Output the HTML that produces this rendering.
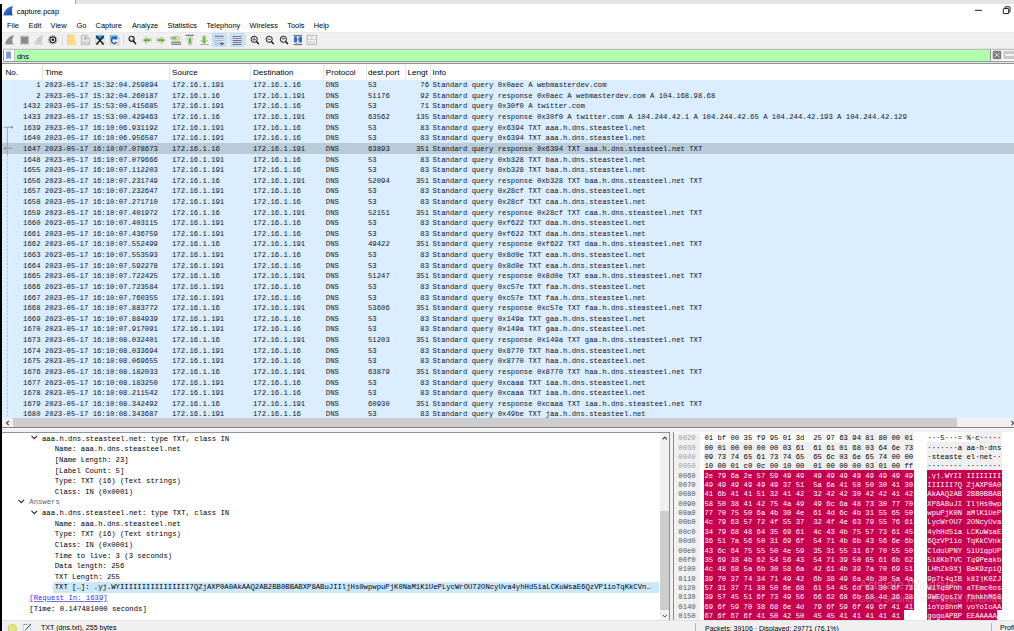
<!DOCTYPE html>
<html><head><meta charset="utf-8"><style>
*{margin:0;padding:0;box-sizing:border-box}
html,body{width:1014px;height:631px;overflow:hidden;background:#fff;position:relative;font-family:"Liberation Sans",sans-serif}
.abs{position:absolute}
.mono{font-family:"Liberation Mono",monospace}
#topstrip{position:absolute;left:75px;top:0;width:939px;height:3.8px;background:#e3e4e6;border-left:1px solid #a4a4a4}
#leftbar{position:absolute;left:0;top:4px;width:2px;height:627px;background:#000}
#title{position:absolute;left:16.8px;top:7.1px;font-size:7.3px;color:#000;line-height:10px}
.menu{position:absolute;top:21.35px;font-size:7.4px;line-height:9px;color:#000}
#toolbar{position:absolute;left:2px;top:32.3px;width:1012px;height:17px;background:#f0f0f0;border-top:1px solid #e9e9e9;border-bottom:1px solid #e4e4e4}
#fgap{position:absolute;left:2px;top:61.8px;width:1012px;height:1.6px;background:#e9e9e9}
#filter{position:absolute;left:3.3px;top:49.3px;width:988px;height:12.5px;background:#afffaf;border:1px solid #8a8a8a;border-top-color:#bdbdbd;border-bottom-color:#86a086;border-radius:1.5px 0 0 1.5px}
#fright{position:absolute;left:991.3px;top:49.3px;width:23px;height:12.5px;background:#fff;border-top:1px solid #bdbdbd;border-bottom:1px solid #9a9a9a}
#fbm{position:absolute;left:0;top:0;width:10.6px;height:10.5px;background:#fff;border-right:1px solid #c4c4c4}
#ftext{position:absolute;left:12.6px;top:1.5px;font-size:7.5px;line-height:9px;color:#000}
#plhead{position:absolute;left:2px;top:63.2px;width:1012px;height:16.5px;background:#fff;border-top:0.9px solid #8c9299}
.hd{position:absolute;top:4.2px;font-size:8.1px;line-height:9px;color:#000}
.hsep{position:absolute;top:0;width:1px;height:16px;background:#e5e5e5}
#plist{position:absolute;left:2px;top:79.7px;width:1012px;height:337.9px;background:#daeeff;overflow:hidden}
.row{position:absolute;left:0;width:1012px;height:10.62px;background:#daeeff;font-family:"Liberation Mono",monospace;font-size:7.267px;line-height:10.62px;color:#12121e;white-space:pre}
.row.sel{background:#b9cbd8}
.c{position:absolute;top:0.5px}
.no{right:973.5px;text-align:right}
.tm{left:42.8px}
.sr{left:170.0px}
.ds{left:251.0px}
.pr{left:323.8px}
.pt{left:366.0px}
.ln{right:585.0px;text-align:right}
.in{left:430.5px}
#hscroll{position:absolute;left:2px;top:417.6px;width:1012px;height:9.8px;background:#f0f0f0}
#hthumb{position:absolute;left:11px;top:0;width:944px;height:9.8px;background:#cdcdcd}
#hsl{position:absolute;left:0;top:0;width:11px;height:10.1px;background:#f0f0f0;font-size:8px;line-height:10px;text-align:center;color:#606060}
#split1{position:absolute;left:2px;top:427.4px;width:1012px;height:1.1px;background:#7a8188}
#split2{position:absolute;left:2px;top:428.5px;width:1012px;height:3.2px;background:#f0f0f0}
#split3{position:absolute;left:2px;top:431.7px;width:668px;height:0.9px;background:#8d949b}
#split4{position:absolute;left:673.4px;top:431.7px;width:341px;height:0.9px;background:#8d949b}
#details{position:absolute;left:2px;top:432.8px;width:658px;height:188px;background:#fff;overflow:hidden}
.tr{position:absolute;font-family:"Liberation Mono",monospace;font-size:7.267px;line-height:10.62px;height:10.62px;color:#000;white-space:pre}
.tr.ans{color:#56606a}
.tr.link{color:#3434e0;text-decoration:underline;text-decoration-color:#7070f0}
.tr.tsel{background:#cce8ff;width:606px;padding-left:1.6px;margin-left:-1.6px;overflow:hidden}
.chev{position:absolute;width:4px;height:4px;border-right:1px solid #333;border-bottom:1px solid #333;transform:rotate(45deg);margin-top:2.6px}
#vscroll{position:absolute;left:660px;top:432.8px;width:9.5px;height:188px;background:#f0f0f0}
#vthumb{position:absolute;left:0;top:78px;width:9.5px;height:99px;background:#cdcdcd}
#hexpane{position:absolute;left:673.4px;top:432.4px;width:341px;height:187.6px;background:#fff;border-left:0.9px solid #858c93;overflow:hidden}
#hsplit{position:absolute;left:668.8px;top:432.4px;width:4.6px;height:187.6px;background:#f0f0f0;border-left:0.9px solid #858c93}
.hoff{position:absolute;left:678.3px;font-family:"Liberation Mono",monospace;font-size:7.267px;line-height:9.36px;color:#a0a0a0;white-space:pre}
.hx{position:absolute;left:704.4px;font-family:"Liberation Mono",monospace;font-size:7.267px;line-height:9.36px;color:#000;white-space:pre}
.as{position:absolute;left:927.3px;font-family:"Liberation Mono",monospace;font-size:7.267px;line-height:9.36px;color:#000;white-space:pre}
.hbg{position:absolute;height:9.36px}
.hbg.g{background:#efefef}
.hoff.dk{color:#4f5860}
.hbg.m{background:#c6004f}
.hx.w,.as.w{color:#fff}
#hoffbg{position:absolute;left:674.4px;top:432.9px;width:25.6px;height:188px;background:#f0f0f0}

.st{position:absolute;font-size:7.1px;line-height:9px;color:#000;white-space:pre}
.wm{position:absolute;color:rgba(205,205,205,0.42);white-space:pre;line-height:1}
#status{position:absolute;left:2px;top:620px;width:1012px;height:11px;background:#f0f0f0;border-top:0.8px solid #e2e2e2}
</style></head><body>
<div id="topstrip"></div>
<div id="leftbar"></div>
<svg class="abs" style="left:0;top:0" width="16" height="18" viewBox="0 0 16 18"><defs><linearGradient id="fg" x1="0" y1="0" x2="1" y2="1"><stop offset="0" stop-color="#4a8ef0"/><stop offset="1" stop-color="#0b3fa8"/></linearGradient></defs><path d="M3.3 15.3 C4.3 10.5 7.5 6.9 13.1 6.1 C11.7 8.6 11.5 12 12.6 15.3 Z" fill="url(#fg)"/><path d="M3.3 15.4 H12.7" stroke="#8aa0c0" stroke-width="0.6"/></svg>
<div id="title">capture.pcap</div>
<svg class="abs" style="left:960px;top:0" width="54" height="20" viewBox="960 0 54 20"><path d="M975 10.3 H981.9" stroke="#000" stroke-width="0.9"/><path d="M1005 8.4 V7.2 Q1005 6.8 1005.4 6.8 H1009.6 Q1010 6.8 1010 7.2 V11.6 Q1010 12 1009.6 12 H1008.7" fill="none" stroke="#000" stroke-width="0.9"/><rect x="1003.3" y="8.6" width="5.4" height="5" rx="0.6" fill="#fff" stroke="#000" stroke-width="0.9"/></svg>
<div class="menu" style="left:7px">File</div>
<div class="menu" style="left:28.5px">Edit</div>
<div class="menu" style="left:50.6px">View</div>
<div class="menu" style="left:76.6px">Go</div>
<div class="menu" style="left:95.6px">Capture</div>
<div class="menu" style="left:131.9px">Analyze</div>
<div class="menu" style="left:167.5px">Statistics</div>
<div class="menu" style="left:206.5px">Telephony</div>
<div class="menu" style="left:249.6px">Wireless</div>
<div class="menu" style="left:287.3px">Tools</div>
<div class="menu" style="left:313.7px">Help</div>
<div id="toolbar"></div><div id="fgap"></div>
<svg class="abs" style="left:0;top:0" width="330" height="50" viewBox="0 0 330 50"><path d="M5 44.5 C6.2 39.275 9.275 35.76 14.5 35 C11.84 37.85 11.84 41.65 13.55 44.5 Z" fill="#8f8f8f"/><path d="M5 44.5 L14.5 44.5" stroke="#c8c8c8" stroke-width="0.8"/><rect x="20.3" y="36" width="8.6" height="8.4" fill="#b4b4b4" stroke="#c8c8c8" stroke-width="0.6"/><rect x="21.3" y="37" width="6.6" height="6.4" fill="#8a8a8a"/><path d="M34.5 44.5 C35.7 39.275 38.775 35.76 44.0 35 C41.34 37.85 41.34 41.65 43.05 44.5 Z" fill="#c8c8c8"/><circle cx="39" cy="41" r="2.3" fill="none" stroke="#f4f4f4" stroke-width="1.1"/><circle cx="39" cy="41" r="2.3" fill="none" stroke="#9a9a9a" stroke-width="0.5"/><circle cx="52.8" cy="39.8" r="4.3" fill="none" stroke="#9c9c9c" stroke-width="1.1" stroke-dasharray="1.2 0.7"/><circle cx="52.8" cy="39.8" r="2.9" fill="#fff" stroke="#1a1a1a" stroke-width="1.1"/><circle cx="52.8" cy="39.8" r="1.25" fill="#000"/><rect x="62.0" y="35" width="0.8" height="10" fill="#d2d2d2"/><rect x="123.1" y="35" width="0.8" height="10" fill="#d2d2d2"/><rect x="226.9" y="35" width="0.8" height="10" fill="#d2d2d2"/><rect x="245.1" y="35" width="0.8" height="10" fill="#d2d2d2"/><path d="M67.3 35 H74.7 V41.3 H76 V45 H67.3 Z" fill="#fadd82"/><path d="M67.3 35.3 H74.7 M67.6 35 V45" stroke="#f0c850" stroke-width="0.6"/><path d="M81.2 35.3 H87.4 L89.9 37.8 V44.7 H81.2 Z" fill="#dedede" stroke="#b0b0b0" stroke-width="0.7"/><path d="M87.4 35.3 V37.8 H89.9" fill="#f2f2f2" stroke="#b0b0b0" stroke-width="0.5"/><path d="M85.5 36.8 V40.6 M84 38.6 L85.5 37 L87 38.6" stroke="#9c9c9c" stroke-width="0.8" fill="none"/><path d="M82.4 42.6 H88.8" stroke="#a8a8a8" stroke-width="1.1" stroke-dasharray="1 0.8"/><path d="M82.4 41 H88.8" stroke="#fbfbfb" stroke-width="0.8"/><rect x="95.8" y="35.2" width="8.2" height="9.4" fill="#eef1e6" stroke="#bdbdb0" stroke-width="0.6"/><rect x="96" y="35.4" width="7.8" height="3.8" fill="#3ea2ea"/><path d="M96.4 35.9 L103.6 44.4 M103.6 35.9 L96.4 44.4" stroke="#1a1a1a" stroke-width="1.5"/><path d="M110.2 35.2 H117 L119 37.2 V44.8 H110.2 Z" fill="#eef1e6" stroke="#a9a99a" stroke-width="0.6"/><rect x="110.5" y="35.6" width="7" height="3.8" fill="#3ea2ea"/><path d="M116.6 38.6 A2.9 2.9 0 1 0 116.8 42.2" fill="none" stroke="#1c4fb8" stroke-width="1.4"/><path d="M114.6 36.8 L117.4 37.8 L115.8 40 Z" fill="#1c4fb8"/><circle cx="131.6" cy="38.8" r="2.6" fill="#c8c8c8" stroke="#262626" stroke-width="1.1"/><circle cx="131" cy="38.2" r="0.9" fill="#f4f4f4"/><path d="M133.3 40.9 L135.9 44.1" stroke="#000" stroke-width="1.5"/><path d="M142 40.2 L146.8 36.5 V38.5 H151.3 V41.9 H146.8 V43.9 Z" fill="#fafafa" stroke="#b4b4b4" stroke-width="0.7"/><path d="M143.4 40.2 L146.3 38 V39.3 H150.4 V41.1 H146.3 V42.4 Z" fill="#4db80e"/><path d="M166 40.2 L161.2 36.5 V38.5 H156.7 V41.9 H161.2 V43.9 Z" fill="#fafafa" stroke="#b4b4b4" stroke-width="0.7"/><path d="M164.6 40.2 L161.7 38 V39.3 H157.6 V41.1 H161.7 V42.4 Z" fill="#4db80e"/><rect x="170.4" y="36.6" width="9.6" height="3.4" rx="1.7" fill="#f6f6f6" stroke="#9a9a9a" stroke-width="0.6"/><rect x="171.6" y="37.3" width="5" height="2" fill="#6bc01e"/><rect x="177.8" y="37.3" width="1.8" height="2" fill="#f0d030"/><path d="M171.2 42.2 H181 M171.2 44.2 H181" stroke="#3a3a3a" stroke-width="0.8"/><path d="M185.5 35.3 H194" stroke="#333" stroke-width="0.8"/><path d="M187.2 39.6 Q187.2 37.1 190 37.1 Q192.8 37.1 192.8 39.6 L191.7 40.9 V44 Q191.7 44.7 191 44.7 H189 Q188.3 44.7 188.3 44 V40.9 Z" fill="#fafafa" stroke="#8c8c8c" stroke-width="0.6"/><path d="M189 38.6 H191 V43.6 H189 Z M188.2 39.8 L190 37.7 L191.8 39.8 Z" fill="#56b81a"/><path d="M200 44.6 H209" stroke="#7a7a7a" stroke-width="0.6"/><path d="M202.6 36 H205.8 V40.4 H207.6 L204.2 44.3 L200.8 40.4 H202.6 Z" fill="#fafafa" stroke="#9a9a9a" stroke-width="0.6"/><path d="M203.4 36.6 H205 V41 H206.2 L204.2 43.4 L202.2 41 H203.4 Z" fill="#50b414"/><rect x="212.2" y="33.4" width="13.8" height="13.2" fill="#cce4f7" stroke="#a9d1f0" stroke-width="0.6"/><path d="M214.5 36.3 H223.5 M214.5 38.4 H223.5 M214.5 40.5 H223.5 M214.5 42.6 H223.5 M214.5 44.6 H223.5" stroke="#8e8e8e" stroke-width="0.5"/><path d="M214.5 36.3 H223.5" stroke="#555" stroke-width="0.7"/><path d="M219.6 43 H224.4 L222 45.2 Z" fill="#1f5fb4"/><rect x="230.2" y="33.4" width="13.8" height="13.2" fill="#cce4f7" stroke="#a9d1f0" stroke-width="0.6"/><path d="M232.6 36.5 H241.6" stroke="#555" stroke-width="0.8"/><path d="M232.6 38.5 H241.6" stroke="#e84a4a" stroke-width="0.8"/><path d="M232.6 40.5 H241.6" stroke="#2d57c0" stroke-width="0.8"/><path d="M232.6 42.5 H241.6" stroke="#7d4c9a" stroke-width="0.8"/><path d="M232.6 44.5 H241.6" stroke="#555" stroke-width="0.8"/><circle cx="254.2" cy="39.3" r="3.1" fill="#e6e6e6" stroke="#1c1c1c" stroke-width="1"/><path d="M256.4 41.5 L258.8 44.099999999999994" stroke="#000" stroke-width="1.3"/><path d="M252.6 39.3 H255.79999999999998 M254.2 37.7 V40.9" stroke="#333" stroke-width="0.7"/><circle cx="269.2" cy="39.3" r="3.1" fill="#e6e6e6" stroke="#1c1c1c" stroke-width="1"/><path d="M271.4 41.5 L273.8 44.099999999999994" stroke="#000" stroke-width="1.3"/><path d="M267.59999999999997 39.3 H270.8" stroke="#333" stroke-width="0.8"/><circle cx="283.4" cy="39.3" r="3.1" fill="#e6e6e6" stroke="#1c1c1c" stroke-width="1"/><path d="M285.59999999999997 41.5 L288.0 44.099999999999994" stroke="#000" stroke-width="1.3"/><path d="M281.79999999999995 38.7 H285.0" stroke="#444" stroke-width="1"/><path d="M293.6 35.6 H302.2 M293.6 44.6 H302.2" stroke="#3a3a3a" stroke-width="0.8"/><path d="M296.6 36 V44.4 M299.2 36 V44.4" stroke="#8a8a8a" stroke-width="0.6"/><path d="M294 36.4 H296.3 L297.6 39.4 L296.3 42.4 H294 Z M302 36.4 H299.5 L298.2 39.4 L299.5 42.4 H302 Z" fill="#2f72c4"/><rect x="307.2" y="35.3" width="9.4" height="9.4" fill="#f6f6f6" stroke="#a0a0a0" stroke-width="0.7"/><path d="M307.2 39.2 H316.6 M311.9 39.2 V44.7" stroke="#b0b0b0" stroke-width="0.6"/><path d="M311.9 36.2 V38.4 M309 41 L310.4 42.2 L309 43.4 M314.8 41 L313.4 42.2 L314.8 43.4" stroke="#8a8a8a" stroke-width="0.5" fill="none"/></svg>
<div id="filter"><div id="fbm"><svg class="abs" style="left:0;top:0" width="11" height="10" viewBox="0 0 11 10"><path d="M2.2 1.6 H6.9 V9.6 L4.55 8.1 L2.2 9.6 Z" fill="#729cd6"/></svg></div><div id="ftext">dns</div></div>
<div id="fright"><svg class="abs" style="left:0;top:0" width="23" height="11" viewBox="991.3 50.5 23 11"><rect x="993" y="51.3" width="8.6" height="8.4" rx="1" fill="#7d7d7d"/><path d="M994.8 53.2 L999.8 57.8 M999.8 53.2 L994.8 57.8" stroke="#e8e8e8" stroke-width="0.8"/><rect x="1003.6" y="51.3" width="11" height="8.4" rx="1" fill="#c9c9c9"/><path d="M1005.5 55.4 H1014" stroke="#fff" stroke-width="1.6"/></svg></div>
<div id="plhead">
<span class="hd" style="left:3.5px">No.</span><div class="hsep" style="left:40.2px"></div>
<span class="hd" style="left:43px">Time</span><div class="hsep" style="left:167.3px"></div>
<span class="hd" style="left:170px">Source</span><div class="hsep" style="left:248.3px"></div>
<span class="hd" style="left:251px">Destination</span><div class="hsep" style="left:321.3px"></div>
<span class="hd" style="left:323.8px">Protocol</span><div class="hsep" style="left:363.5px"></div>
<span class="hd" style="left:366px">dest.port</span><div class="hsep" style="left:402.7px"></div>
<span class="hd" style="left:405.4px">Lengt</span><div class="hsep" style="left:428px"></div>
<span class="hd" style="left:430.5px">Info</span>
</div>
<div id="plist">
<div class="row" style="top:0.000px"><span class="c no">1</span><span class="c tm">2023-05-17 15:32:04.259894</span><span class="c sr">172.16.1.191</span><span class="c ds">172.16.1.16</span><span class="c pr">DNS</span><span class="c pt">53</span><span class="c ln">76</span><span class="c in">Standard query 0x0aec A webmasterdev.com</span></div>
<div class="row" style="top:10.620px"><span class="c no">2</span><span class="c tm">2023-05-17 15:32:04.260187</span><span class="c sr">172.16.1.16</span><span class="c ds">172.16.1.191</span><span class="c pr">DNS</span><span class="c pt">51176</span><span class="c ln">92</span><span class="c in">Standard query response 0x0aec A webmasterdev.com A 104.168.98.68</span></div>
<div class="row" style="top:21.240px"><span class="c no">1432</span><span class="c tm">2023-05-17 15:53:00.415685</span><span class="c sr">172.16.1.191</span><span class="c ds">172.16.1.16</span><span class="c pr">DNS</span><span class="c pt">53</span><span class="c ln">71</span><span class="c in">Standard query 0x30f0 A twitter.com</span></div>
<div class="row" style="top:31.860px"><span class="c no">1433</span><span class="c tm">2023-05-17 15:53:00.429463</span><span class="c sr">172.16.1.16</span><span class="c ds">172.16.1.191</span><span class="c pr">DNS</span><span class="c pt">63562</span><span class="c ln">135</span><span class="c in">Standard query response 0x30f0 A twitter.com A 104.244.42.1 A 104.244.42.65 A 104.244.42.193 A 104.244.42.129</span></div>
<div class="row" style="top:42.480px"><span class="c no">1639</span><span class="c tm">2023-05-17 16:10:06.931192</span><span class="c sr">172.16.1.191</span><span class="c ds">172.16.1.16</span><span class="c pr">DNS</span><span class="c pt">53</span><span class="c ln">83</span><span class="c in">Standard query 0x6394 TXT aaa.h.dns.steasteel.net</span></div>
<div class="row" style="top:53.100px"><span class="c no">1640</span><span class="c tm">2023-05-17 16:10:06.956587</span><span class="c sr">172.16.1.191</span><span class="c ds">172.16.1.16</span><span class="c pr">DNS</span><span class="c pt">53</span><span class="c ln">83</span><span class="c in">Standard query 0x6394 TXT aaa.h.dns.steasteel.net</span></div>
<div class="row sel" style="top:63.720px"><span class="c no">1647</span><span class="c tm">2023-05-17 16:10:07.078673</span><span class="c sr">172.16.1.16</span><span class="c ds">172.16.1.191</span><span class="c pr">DNS</span><span class="c pt">63893</span><span class="c ln">351</span><span class="c in">Standard query response 0x6394 TXT aaa.h.dns.steasteel.net TXT</span></div>
<div class="row" style="top:74.340px"><span class="c no">1648</span><span class="c tm">2023-05-17 16:10:07.079666</span><span class="c sr">172.16.1.191</span><span class="c ds">172.16.1.16</span><span class="c pr">DNS</span><span class="c pt">53</span><span class="c ln">83</span><span class="c in">Standard query 0xb328 TXT baa.h.dns.steasteel.net</span></div>
<div class="row" style="top:84.960px"><span class="c no">1655</span><span class="c tm">2023-05-17 16:10:07.112203</span><span class="c sr">172.16.1.191</span><span class="c ds">172.16.1.16</span><span class="c pr">DNS</span><span class="c pt">53</span><span class="c ln">83</span><span class="c in">Standard query 0xb328 TXT baa.h.dns.steasteel.net</span></div>
<div class="row" style="top:95.580px"><span class="c no">1656</span><span class="c tm">2023-05-17 16:10:07.231749</span><span class="c sr">172.16.1.16</span><span class="c ds">172.16.1.191</span><span class="c pr">DNS</span><span class="c pt">52094</span><span class="c ln">351</span><span class="c in">Standard query response 0xb328 TXT baa.h.dns.steasteel.net TXT</span></div>
<div class="row" style="top:106.200px"><span class="c no">1657</span><span class="c tm">2023-05-17 16:10:07.232647</span><span class="c sr">172.16.1.191</span><span class="c ds">172.16.1.16</span><span class="c pr">DNS</span><span class="c pt">53</span><span class="c ln">83</span><span class="c in">Standard query 0x28cf TXT caa.h.dns.steasteel.net</span></div>
<div class="row" style="top:116.820px"><span class="c no">1658</span><span class="c tm">2023-05-17 16:10:07.271710</span><span class="c sr">172.16.1.191</span><span class="c ds">172.16.1.16</span><span class="c pr">DNS</span><span class="c pt">53</span><span class="c ln">83</span><span class="c in">Standard query 0x28cf TXT caa.h.dns.steasteel.net</span></div>
<div class="row" style="top:127.440px"><span class="c no">1659</span><span class="c tm">2023-05-17 16:10:07.401972</span><span class="c sr">172.16.1.16</span><span class="c ds">172.16.1.191</span><span class="c pr">DNS</span><span class="c pt">52151</span><span class="c ln">351</span><span class="c in">Standard query response 0x28cf TXT caa.h.dns.steasteel.net TXT</span></div>
<div class="row" style="top:138.060px"><span class="c no">1660</span><span class="c tm">2023-05-17 16:10:07.403115</span><span class="c sr">172.16.1.191</span><span class="c ds">172.16.1.16</span><span class="c pr">DNS</span><span class="c pt">53</span><span class="c ln">83</span><span class="c in">Standard query 0xf622 TXT daa.h.dns.steasteel.net</span></div>
<div class="row" style="top:148.680px"><span class="c no">1661</span><span class="c tm">2023-05-17 16:10:07.436759</span><span class="c sr">172.16.1.191</span><span class="c ds">172.16.1.16</span><span class="c pr">DNS</span><span class="c pt">53</span><span class="c ln">83</span><span class="c in">Standard query 0xf622 TXT daa.h.dns.steasteel.net</span></div>
<div class="row" style="top:159.300px"><span class="c no">1662</span><span class="c tm">2023-05-17 16:10:07.552499</span><span class="c sr">172.16.1.16</span><span class="c ds">172.16.1.191</span><span class="c pr">DNS</span><span class="c pt">49422</span><span class="c ln">351</span><span class="c in">Standard query response 0xf622 TXT daa.h.dns.steasteel.net TXT</span></div>
<div class="row" style="top:169.920px"><span class="c no">1663</span><span class="c tm">2023-05-17 16:10:07.553593</span><span class="c sr">172.16.1.191</span><span class="c ds">172.16.1.16</span><span class="c pr">DNS</span><span class="c pt">53</span><span class="c ln">83</span><span class="c in">Standard query 0x8d0e TXT eaa.h.dns.steasteel.net</span></div>
<div class="row" style="top:180.540px"><span class="c no">1664</span><span class="c tm">2023-05-17 16:10:07.592278</span><span class="c sr">172.16.1.191</span><span class="c ds">172.16.1.16</span><span class="c pr">DNS</span><span class="c pt">53</span><span class="c ln">83</span><span class="c in">Standard query 0x8d0e TXT eaa.h.dns.steasteel.net</span></div>
<div class="row" style="top:191.160px"><span class="c no">1665</span><span class="c tm">2023-05-17 16:10:07.722425</span><span class="c sr">172.16.1.16</span><span class="c ds">172.16.1.191</span><span class="c pr">DNS</span><span class="c pt">51247</span><span class="c ln">351</span><span class="c in">Standard query response 0x8d0e TXT eaa.h.dns.steasteel.net TXT</span></div>
<div class="row" style="top:201.780px"><span class="c no">1666</span><span class="c tm">2023-05-17 16:10:07.723584</span><span class="c sr">172.16.1.191</span><span class="c ds">172.16.1.16</span><span class="c pr">DNS</span><span class="c pt">53</span><span class="c ln">83</span><span class="c in">Standard query 0xc57e TXT faa.h.dns.steasteel.net</span></div>
<div class="row" style="top:212.400px"><span class="c no">1667</span><span class="c tm">2023-05-17 16:10:07.760355</span><span class="c sr">172.16.1.191</span><span class="c ds">172.16.1.16</span><span class="c pr">DNS</span><span class="c pt">53</span><span class="c ln">83</span><span class="c in">Standard query 0xc57e TXT faa.h.dns.steasteel.net</span></div>
<div class="row" style="top:223.020px"><span class="c no">1668</span><span class="c tm">2023-05-17 16:10:07.883772</span><span class="c sr">172.16.1.16</span><span class="c ds">172.16.1.191</span><span class="c pr">DNS</span><span class="c pt">53606</span><span class="c ln">351</span><span class="c in">Standard query response 0xc57e TXT faa.h.dns.steasteel.net TXT</span></div>
<div class="row" style="top:233.640px"><span class="c no">1669</span><span class="c tm">2023-05-17 16:10:07.884939</span><span class="c sr">172.16.1.191</span><span class="c ds">172.16.1.16</span><span class="c pr">DNS</span><span class="c pt">53</span><span class="c ln">83</span><span class="c in">Standard query 0x149a TXT gaa.h.dns.steasteel.net</span></div>
<div class="row" style="top:244.260px"><span class="c no">1670</span><span class="c tm">2023-05-17 16:10:07.917091</span><span class="c sr">172.16.1.191</span><span class="c ds">172.16.1.16</span><span class="c pr">DNS</span><span class="c pt">53</span><span class="c ln">83</span><span class="c in">Standard query 0x149a TXT gaa.h.dns.steasteel.net</span></div>
<div class="row" style="top:254.880px"><span class="c no">1673</span><span class="c tm">2023-05-17 16:10:08.032401</span><span class="c sr">172.16.1.16</span><span class="c ds">172.16.1.191</span><span class="c pr">DNS</span><span class="c pt">51203</span><span class="c ln">351</span><span class="c in">Standard query response 0x149a TXT gaa.h.dns.steasteel.net TXT</span></div>
<div class="row" style="top:265.500px"><span class="c no">1674</span><span class="c tm">2023-05-17 16:10:08.033694</span><span class="c sr">172.16.1.191</span><span class="c ds">172.16.1.16</span><span class="c pr">DNS</span><span class="c pt">53</span><span class="c ln">83</span><span class="c in">Standard query 0x8770 TXT haa.h.dns.steasteel.net</span></div>
<div class="row" style="top:276.120px"><span class="c no">1675</span><span class="c tm">2023-05-17 16:10:08.069655</span><span class="c sr">172.16.1.191</span><span class="c ds">172.16.1.16</span><span class="c pr">DNS</span><span class="c pt">53</span><span class="c ln">83</span><span class="c in">Standard query 0x8770 TXT haa.h.dns.steasteel.net</span></div>
<div class="row" style="top:286.740px"><span class="c no">1676</span><span class="c tm">2023-05-17 16:10:08.182033</span><span class="c sr">172.16.1.16</span><span class="c ds">172.16.1.191</span><span class="c pr">DNS</span><span class="c pt">63879</span><span class="c ln">351</span><span class="c in">Standard query response 0x8770 TXT haa.h.dns.steasteel.net TXT</span></div>
<div class="row" style="top:297.360px"><span class="c no">1677</span><span class="c tm">2023-05-17 16:10:08.183250</span><span class="c sr">172.16.1.191</span><span class="c ds">172.16.1.16</span><span class="c pr">DNS</span><span class="c pt">53</span><span class="c ln">83</span><span class="c in">Standard query 0xcaaa TXT iaa.h.dns.steasteel.net</span></div>
<div class="row" style="top:307.980px"><span class="c no">1678</span><span class="c tm">2023-05-17 16:10:08.211542</span><span class="c sr">172.16.1.191</span><span class="c ds">172.16.1.16</span><span class="c pr">DNS</span><span class="c pt">53</span><span class="c ln">83</span><span class="c in">Standard query 0xcaaa TXT iaa.h.dns.steasteel.net</span></div>
<div class="row" style="top:318.600px"><span class="c no">1679</span><span class="c tm">2023-05-17 16:10:08.342492</span><span class="c sr">172.16.1.16</span><span class="c ds">172.16.1.191</span><span class="c pr">DNS</span><span class="c pt">60930</span><span class="c ln">351</span><span class="c in">Standard query response 0xcaaa TXT iaa.h.dns.steasteel.net TXT</span></div>
<div class="row" style="top:329.220px"><span class="c no">1680</span><span class="c tm">2023-05-17 16:10:08.343687</span><span class="c sr">172.16.1.191</span><span class="c ds">172.16.1.16</span><span class="c pr">DNS</span><span class="c pt">53</span><span class="c ln">83</span><span class="c in">Standard query 0x49be TXT jaa.h.dns.steasteel.net</span></div>
</div>
<svg class="abs" style="left:0;top:0" width="20" height="420" viewBox="0 0 20 420"><path d="M4 127.3 H12.2 M7.4 148.4 H12.4" stroke="#8c8c8c" stroke-width="0.8"/><path d="M11 125.6 L13.3 127.3 L11 129 Z" fill="#8c8c8c"/><path d="M3.6 148.4 L5.9 146.7 V150.1 Z" fill="#8c8c8c"/><path d="M4.5 148.4 H7.4" stroke="#8c8c8c" stroke-width="0.8"/><path d="M7.4 127.3 V155" stroke="#9a9a9a" stroke-width="0.8"/><path d="M7.4 155 V417.5" stroke="#b8b8b8" stroke-width="0.8" stroke-dasharray="2 1.6"/></svg>
<div id="hscroll"><div id="hthumb"></div><svg class="abs" style="left:1007px;top:0" width="5" height="10" viewBox="0 0 5 10"><path d="M2.5 3 L4.6 5.1 L2.5 7.2" fill="none" stroke="#404040" stroke-width="1.1"/></svg><div id="hsl"><svg class="abs" style="left:0;top:0" width="11" height="10" viewBox="0 0 11 10"><path d="M6.8 3 L4.5 5.1 L6.8 7.2" fill="none" stroke="#404040" stroke-width="1.1"/></svg></div></div>
<div id="split1"></div><div id="split2"></div><div id="split3"></div><div id="split4"></div>
<div id="details">
</div>
<svg class="abs" style="left:30.80px;top:435.300px" width="7" height="5" viewBox="0 0 7 5"><path d="M0.5 0.9 L3.3 3.7 L6.1 0.9" fill="none" stroke="#2a2a2a" stroke-width="1.15"/></svg>
<div class="tr " style="top:433.700px;left:42.00px">aaa.h.dns.steasteel.net: type TXT, class IN</div>
<div class="tr " style="top:444.320px;left:54.70px">Name: aaa.h.dns.steasteel.net</div>
<div class="tr " style="top:454.940px;left:54.70px">[Name Length: 23]</div>
<div class="tr " style="top:465.560px;left:54.70px">[Label Count: 5]</div>
<div class="tr " style="top:476.180px;left:54.70px">Type: TXT (16) (Text strings)</div>
<div class="tr " style="top:486.800px;left:54.70px">Class: IN (0x0001)</div>
<svg class="abs" style="left:18.10px;top:499.020px" width="7" height="5" viewBox="0 0 7 5"><path d="M0.5 0.9 L3.3 3.7 L6.1 0.9" fill="none" stroke="#2a2a2a" stroke-width="1.15"/></svg>
<div class="tr ans" style="top:497.420px;left:29.30px">Answers</div>
<svg class="abs" style="left:30.80px;top:509.640px" width="7" height="5" viewBox="0 0 7 5"><path d="M0.5 0.9 L3.3 3.7 L6.1 0.9" fill="none" stroke="#2a2a2a" stroke-width="1.15"/></svg>
<div class="tr " style="top:508.040px;left:42.00px">aaa.h.dns.steasteel.net: type TXT, class IN</div>
<div class="tr " style="top:518.660px;left:54.70px">Name: aaa.h.dns.steasteel.net</div>
<div class="tr " style="top:529.280px;left:54.70px">Type: TXT (16) (Text strings)</div>
<div class="tr " style="top:539.900px;left:54.70px">Class: IN (0x0001)</div>
<div class="tr " style="top:550.520px;left:54.70px">Time to live: 3 (3 seconds)</div>
<div class="tr " style="top:561.140px;left:54.70px">Data length: 256</div>
<div class="tr " style="top:571.760px;left:54.70px">TXT Length: 255</div>
<div class="tr tsel" style="top:582.380px;left:54.70px">TXT […]: .yj.WYIIIIIIIIIIIIIIII7QZjAXP0A0AkAAQ2AB2BB0BBABXP8ABuJIIljHs0wpwpuPjK0NaM1K1UePLycWrOU72ONcyUva4yhHd5iaLCKuWsaE6QzVP1ioTqKkCVn…</div>
<div class="tr link" style="top:593.000px;left:29.30px">[Request In: 1639]</div>
<div class="tr " style="top:603.620px;left:29.30px">[Time: 0.147481000 seconds]</div>
<div id="vscroll"><div id="vthumb"></div><svg class="abs" style="left:0;top:0" width="10" height="188" viewBox="0 0 10 188"><path d="M2.6 6.3 L4.8 4 L7 6.3" fill="none" stroke="#404040" stroke-width="1.1"/><path d="M2.6 181.8 L4.8 184 L7 181.8" fill="none" stroke="#404040" stroke-width="0.9"/></svg></div>
<div id="hsplit"></div>
<div id="hexpane"></div><div id="hoffbg"></div>
<div class="hbg g" style="top:432.360px;left:839.9px;width:74.10px"></div>
<div class="hbg g" style="top:432.360px;left:975.26px;width:26.54px"></div>
<div class="hoff" style="top:434.200px">0020</div>
<div class="hx" style="top:434.200px">01 bf 00 35 f9 95 01 3d  25 97 63 94 81 80 00 01</div>
<div class="as" style="top:434.200px">···5···= %·c·····</div>
<div class="hbg g" style="top:441.720px;left:704.4px;width:209.60px"></div>
<div class="hbg g" style="top:441.720px;left:927.3px;width:74.50px"></div>
<div class="hoff" style="top:443.560px">0030</div>
<div class="hx" style="top:443.560px">00 01 00 00 00 00 03 61  61 61 01 68 03 64 6e 73</div>
<div class="as" style="top:443.560px">·······a aa·h·dns</div>
<div class="hbg g" style="top:451.080px;left:704.4px;width:209.60px"></div>
<div class="hbg g" style="top:451.080px;left:927.3px;width:74.50px"></div>
<div class="hoff" style="top:452.920px">0040</div>
<div class="hx" style="top:452.920px">09 73 74 65 61 73 74 65  65 6c 03 6e 65 74 00 00</div>
<div class="as" style="top:452.920px">·steaste el·net··</div>
<div class="hbg g" style="top:460.440px;left:704.4px;width:209.60px"></div>
<div class="hbg g" style="top:460.440px;left:927.3px;width:74.50px"></div>
<div class="hoff" style="top:462.280px">0050</div>
<div class="hx" style="top:462.280px">10 00 01 c0 0c 00 10 00  01 00 00 00 03 01 00 ff</div>
<div class="as" style="top:462.280px">········ ········</div>
<div class="hbg m" style="top:469.800px;left:704.4px;width:209.60px"></div>
<div class="hbg m" style="top:469.800px;left:927.3px;width:74.50px"></div>
<div class="hoff dk" style="top:471.640px">0060</div>
<div class="hx w" style="top:471.640px">2e 79 6a 2e 57 59 49 49  49 49 49 49 49 49 49 49</div>
<div class="as w" style="top:471.640px">.yj.WYII IIIIIIII</div>
<div class="hbg m" style="top:479.160px;left:704.4px;width:209.60px"></div>
<div class="hbg m" style="top:479.160px;left:927.3px;width:74.50px"></div>
<div class="hoff dk" style="top:481.000px">0070</div>
<div class="hx w" style="top:481.000px">49 49 49 49 49 49 37 51  5a 6a 41 58 50 30 41 30</div>
<div class="as w" style="top:481.000px">IIIIII7Q ZjAXP0A0</div>
<div class="hbg m" style="top:488.520px;left:704.4px;width:209.60px"></div>
<div class="hbg m" style="top:488.520px;left:927.3px;width:74.50px"></div>
<div class="hoff dk" style="top:490.360px">0080</div>
<div class="hx w" style="top:490.360px">41 6b 41 41 51 32 41 42  32 42 42 30 42 42 41 42</div>
<div class="as w" style="top:490.360px">AkAAQ2AB 2BB0BBAB</div>
<div class="hbg m" style="top:497.880px;left:704.4px;width:209.60px"></div>
<div class="hbg m" style="top:497.880px;left:927.3px;width:74.50px"></div>
<div class="hoff dk" style="top:499.720px">0090</div>
<div class="hx w" style="top:499.720px">58 50 38 41 42 75 4a 49  49 6c 6a 48 73 30 77 70</div>
<div class="as w" style="top:499.720px">XP8ABuJI IljHs0wp</div>
<div class="hbg m" style="top:507.240px;left:704.4px;width:209.60px"></div>
<div class="hbg m" style="top:507.240px;left:927.3px;width:74.50px"></div>
<div class="hoff dk" style="top:509.080px">00a0</div>
<div class="hx w" style="top:509.080px">77 70 75 50 6a 4b 30 4e  61 4d 6c 4b 31 55 65 50</div>
<div class="as w" style="top:509.080px">wpuPjK0N aMlK1UeP</div>
<div class="hbg m" style="top:516.600px;left:704.4px;width:209.60px"></div>
<div class="hbg m" style="top:516.600px;left:927.3px;width:74.50px"></div>
<div class="hoff dk" style="top:518.440px">00b0</div>
<div class="hx w" style="top:518.440px">4c 79 63 57 72 4f 55 37  32 4f 4e 63 79 55 76 61</div>
<div class="as w" style="top:518.440px">LycWrOU7 2ONcyUva</div>
<div class="hbg m" style="top:525.960px;left:704.4px;width:209.60px"></div>
<div class="hbg m" style="top:525.960px;left:927.3px;width:74.50px"></div>
<div class="hoff dk" style="top:527.800px">00c0</div>
<div class="hx w" style="top:527.800px">34 79 68 48 64 35 69 61  4c 43 4b 75 57 73 61 45</div>
<div class="as w" style="top:527.800px">4yhHd5ia LCKuWsaE</div>
<div class="hbg m" style="top:535.320px;left:704.4px;width:209.60px"></div>
<div class="hbg m" style="top:535.320px;left:927.3px;width:74.50px"></div>
<div class="hoff dk" style="top:537.160px">00d0</div>
<div class="hx w" style="top:537.160px">36 51 7a 56 50 31 69 6f  54 71 4b 6b 43 56 6e 6b</div>
<div class="as w" style="top:537.160px">6QzVP1io TqKkCVnk</div>
<div class="hbg m" style="top:544.680px;left:704.4px;width:209.60px"></div>
<div class="hbg m" style="top:544.680px;left:927.3px;width:74.50px"></div>
<div class="hoff dk" style="top:546.520px">00e0</div>
<div class="hx w" style="top:546.520px">43 6c 64 75 55 50 4e 59  35 31 55 31 67 70 55 50</div>
<div class="as w" style="top:546.520px">ClduUPNY 51U1gpUP</div>
<div class="hbg m" style="top:554.040px;left:704.4px;width:209.60px"></div>
<div class="hbg m" style="top:554.040px;left:927.3px;width:74.50px"></div>
<div class="hoff dk" style="top:555.880px">00f0</div>
<div class="hx w" style="top:555.880px">35 69 38 4b 62 54 56 43  54 71 39 50 65 61 6b 62</div>
<div class="as w" style="top:555.880px">5i8KbTVC Tq9Peakb</div>
<div class="hbg m" style="top:563.400px;left:704.4px;width:209.60px"></div>
<div class="hbg m" style="top:563.400px;left:927.3px;width:74.50px"></div>
<div class="hoff dk" style="top:565.240px">0100</div>
<div class="hx w" style="top:565.240px">4c 48 68 5a 6b 30 58 6a  42 61 4b 39 7a 70 69 51</div>
<div class="as w" style="top:565.240px">LHhZk0Xj BaK9zpiQ</div>
<div class="hbg m" style="top:572.760px;left:704.4px;width:209.60px"></div>
<div class="hbg m" style="top:572.760px;left:927.3px;width:74.50px"></div>
<div class="hoff dk" style="top:574.600px">0110</div>
<div class="hx w" style="top:574.600px">39 70 37 74 34 71 49 42  6b 38 49 6a 4b 30 5a 4a</div>
<div class="as w" style="top:574.600px">9p7t4qIB k8IjK0ZJ</div>
<div class="hbg m" style="top:582.120px;left:704.4px;width:209.60px"></div>
<div class="hbg m" style="top:582.120px;left:927.3px;width:74.50px"></div>
<div class="hoff dk" style="top:583.960px">0120</div>
<div class="hx w" style="top:583.960px">57 31 37 71 38 50 6e 68  61 54 45 6d 63 30 6f 73</div>
<div class="as w" style="top:583.960px">W17q8Pnh aTEmc0os</div>
<div class="hbg m" style="top:591.480px;left:704.4px;width:209.60px"></div>
<div class="hbg m" style="top:591.480px;left:927.3px;width:74.50px"></div>
<div class="hoff dk" style="top:593.320px">0130</div>
<div class="hx w" style="top:593.320px">39 57 45 51 6f 73 49 56  66 62 68 6b 68 4d 36 38</div>
<div class="as w" style="top:593.320px">9WEQosIV fbhkhM68</div>
<div class="hbg m" style="top:600.840px;left:704.4px;width:209.60px"></div>
<div class="hbg m" style="top:600.840px;left:927.3px;width:74.50px"></div>
<div class="hoff dk" style="top:602.680px">0140</div>
<div class="hx w" style="top:602.680px">69 6f 59 70 38 68 6e 4d  79 6f 59 6f 49 6f 41 41</div>
<div class="as w" style="top:602.680px">ioYp8hnM yoYoIoAA</div>
<div class="hbg m" style="top:610.200px;left:704.4px;width:199.56px"></div>
<div class="hbg m" style="top:610.200px;left:927.3px;width:69.76px"></div>
<div class="hoff dk" style="top:612.040px">0150</div>
<div class="hx w" style="top:612.040px">67 6f 67 6f 41 50 42 50  45 45 41 41 41 41 41</div>
<div class="as w" style="top:612.040px">gogoAPBP EEAAAAA</div>
<div id="status"></div>
<svg class="abs" style="left:0;top:615" width="60" height="16" viewBox="0 615 60 16"><circle cx="12.3" cy="628.6" r="4.1" fill="#e6e678" stroke="#b8b840" stroke-width="0.6"/><rect x="23.2" y="624.5" width="7" height="7" fill="#f4f8fc" stroke="#9ab0c8" stroke-width="0.5"/><path d="M25 630.5 L30.8 624.2" stroke="#333" stroke-width="1"/><path d="M23.8 624.4 H27" stroke="#5a8ad0" stroke-width="0.8"/></svg>
<div class="st" style="left:41px;top:624.3px">TXT (dns.txt), 255 bytes</div>
<div class="abs" style="left:695.2px;top:623px;width:0.8px;height:8px;background:#b8b8b8"></div>
<div class="st" style="left:705px;top:624.3px;font-size:6.95px">Packets: 39106 · Displayed: 29771 (76.1%)</div>
<div class="abs" style="left:990.8px;top:623px;width:0.8px;height:8px;background:#b8b8b8"></div>
<div class="st" style="left:1000px;top:624.3px">Profile</div>
<div class="wm" style="left:859.5px;top:578.8px;font-size:12.5px">Activate Windows</div>
<div class="wm" style="left:858.5px;top:594.5px;font-size:9.3px">Go to Settings to activate Windows.</div>
</body></html>
